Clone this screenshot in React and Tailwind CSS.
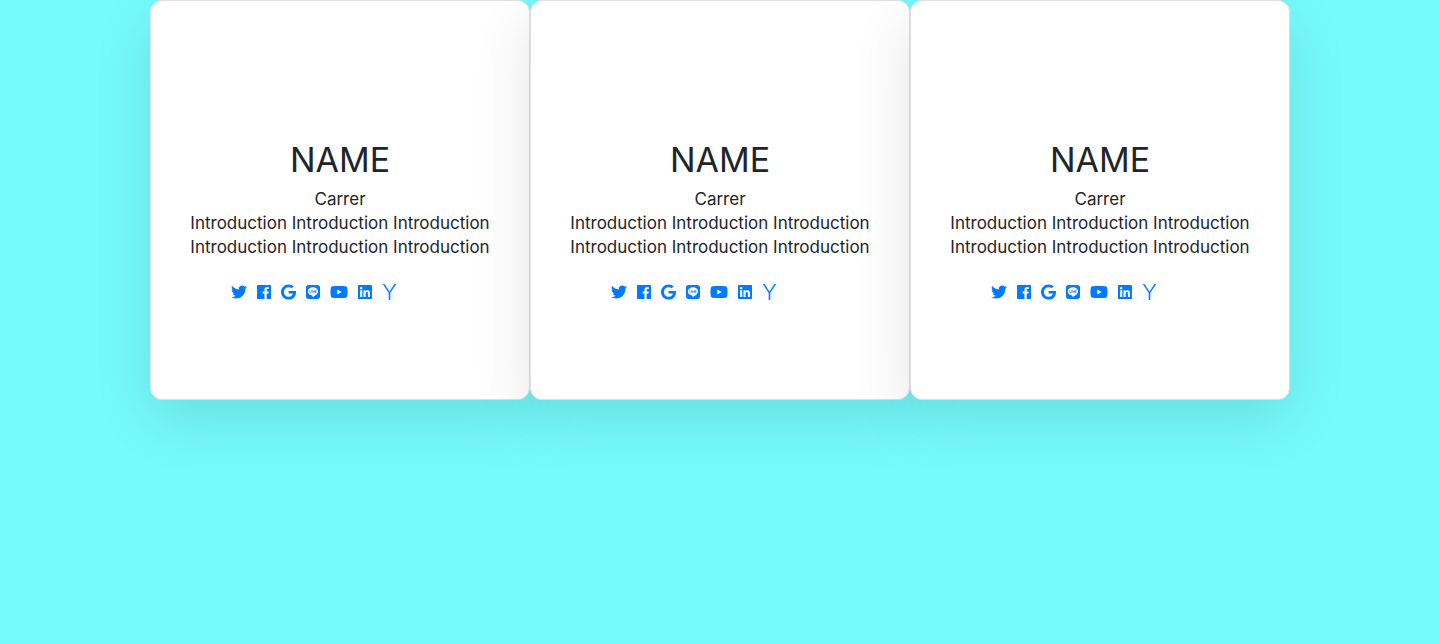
import { FaTwitter, FaGoogle, FaLine, FaYoutube, FaLinkedin } from "react-icons/fa";

function FacebookIcon({ className }) {
  return (
    <svg viewBox="0 0 448 512" fill="currentColor" className={className} aria-hidden="true">
      <path d="M448 56.7v398.5c0 13.7-11.1 24.7-24.7 24.7H309.1V306.5h58.2l8.7-67.6h-67v-43.2c0-19.6 5.4-32.9 33.5-32.9h35.8v-60.5c-6.2-.8-27.4-2.7-52.2-2.7-51.6 0-87 31.5-87 89.4v49.9h-58.4v67.6h58.4V480H24.7C11.1 480 0 468.9 0 455.3V56.7C0 43.1 11.1 32 24.7 32h398.5c13.7 0 24.8 11.1 24.8 24.7z" />
    </svg>
  );
}

const links = [
  { label: "Twitter", Icon: FaTwitter, size: "h-4 w-4" },
  { label: "Facebook", Icon: FacebookIcon, size: "h-4 w-[14px]" },
  { label: "Google", Icon: FaGoogle, size: "h-4 w-[15px]" },
  { label: "LINE", Icon: FaLine, size: "h-4 w-[14px]" },
  { label: "YouTube", Icon: FaYoutube, size: "h-4 w-[18px]" },
  { label: "LinkedIn", Icon: FaLinkedin, size: "h-4 w-[14px]" },
];

const people = [1, 2, 3];

function ProfileCard() {
  return (
    <article className="min-h-[400px] rounded-xl border border-[#dfdfdf] bg-white px-8 pt-[140px] pb-8 text-center text-[#212529] shadow-[0_20px_60px_rgba(0,0,0,0.11)]">
      <h2 className="mb-2 text-[34px] leading-[38px] font-normal">NAME</h2>
      <p>Carrer</p>
      <p>
        Introduction Introduction Introduction Introduction Introduction Introduction
      </p>
      <ul className="mt-[21px] flex h-6 items-center gap-[10px] pl-12 text-[#007bff]">
        {links.map(({ label, Icon, size }) => (
          <li key={label}>
            <a href="#" aria-label={label} className="block">
              <Icon className={size} />
            </a>
          </li>
        ))}
        <li>
          <a href="#" className="block text-[22px] leading-6 font-light">Y</a>
        </li>
      </ul>
    </article>
  );
}

export default function App() {
  return (
    <main className="min-h-screen bg-[#76fafc] font-['Inter','Noto_Sans_CJK_JP',sans-serif] text-[17px] leading-6 font-normal">
      <div className="mx-auto grid max-w-[1140px] grid-cols-1 md:grid-cols-3">
        {people.map((id) => (
          <ProfileCard key={id} />
        ))}
      </div>
    </main>
  );
}
